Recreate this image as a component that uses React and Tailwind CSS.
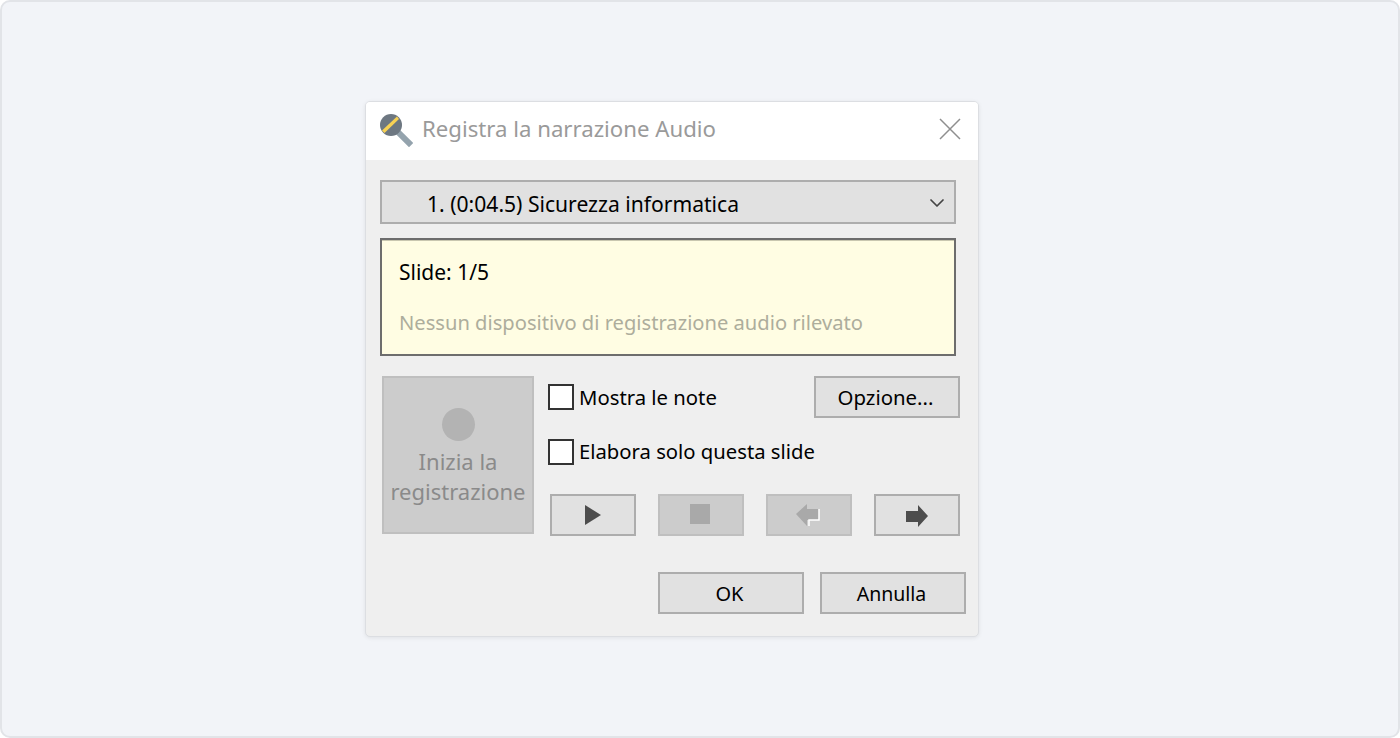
import { ChevronDown } from 'lucide-react'

function Check({ label, size }) {
    return (
        <label className="flex items-center h-[26px]">
            <span className="block w-[26px] h-[26px] bg-white border-2 border-[#333333]" />
            <span className={`ml-[5px] text-black ${size}`}>{label}</span>
        </label>
    )
}

function TransportBtn({ disabled, children }) {
    return (
        <button className={`flex items-center justify-center w-[86px] h-[42px] border-2 ${disabled ? 'bg-[#cccccc] border-[#bfbfbf]' : 'bg-[#e1e1e1] border-[#adadad]'}`}>
            {children}
        </button>
    )
}

function Btn({ label, size }) {
    return (
        <button className={`h-[42px] w-[146px] pt-[1px] pr-[3px] bg-[#e1e1e1] border-2 border-[#adadad] text-black ${size}`}>
            {label}
        </button>
    )
}

export default function App() {
    return (
        <div className="w-[1400px] h-[738px] flex items-center pl-[363px] bg-[#f2f4f8] border-2 border-[#e2e4e8] rounded-[10px] font-['Noto_Sans',sans-serif] overflow-hidden">
            <div className="w-[614px] h-[536px] rounded-[5px] border border-[#dcdee2] bg-[#efefef] shadow-[0_1px_4px_rgba(0,0,0,0.08)] overflow-hidden">
                {/* Title bar */}
                <div className="flex items-center h-[58px] bg-white pl-[13px] pr-[15px]">
                    <svg width="34" height="34" viewBox="0 0 34 34" className="-mt-[2px]">
                        <path d="M19 19 L30 30" stroke="#94a3ad" strokeWidth="6" strokeLinecap="square" />
                        <circle cx="12" cy="12" r="11" fill="#6d7781" />
                        <path d="M3 17.5 L18 3.5 L20 6 L5.5 20 Z" fill="#f7d154" />
                    </svg>
                    <span className="ml-[9px] -mt-[4px] text-[22.2px] text-[#9a9a9a]">Registra la narrazione Audio</span>
                    <svg className="ml-auto -mt-[5px] mr-[1px]" width="24" height="24" viewBox="0 0 24 24">
                        <path d="M2 2 L22 22 M22 2 L2 22" stroke="#8f8f8f" strokeWidth="1.5" fill="none" />
                    </svg>
                </div>

                <div className="px-[14px] pt-[20px]">
                    {/* Slide select */}
                    <div className="flex items-center justify-between w-[576px] h-[44px] bg-[#e1e1e1] border-2 border-[#adadad] pl-[45px] pr-[5px]">
                        <span className="mt-[3px] text-[21.1px] text-black">1. (0:04.5) Sicurezza informatica</span>
                        <ChevronDown size={24} strokeWidth={1.75} className="text-[#444444] mt-[1px]" />
                    </div>

                    {/* Info box */}
                    <div className="mt-[14px] w-[576px] h-[118px] bg-[#fffde3] border-2 border-[#6d6d6d] shadow-[inset_0_1px_0_#c9c7b0] pl-[17px] pt-[17px]">
                        <div className="text-[21px] text-black leading-[30px]">Slide: 1/5</div>
                        <div className="mt-[20px] text-[20.15px] leading-[30px] text-[#adad9c]">Nessun dispositivo di registrazione audio rilevato</div>
                    </div>

                    <div className="flex mt-[20px] ml-[2px] h-[160px]">
                        {/* Record */}
                        <button className="flex flex-col items-center w-[152px] h-[158px] bg-[#cccccc] border-2 border-[#bfbfbf] pt-[30px] text-[22px] leading-[30px] text-[#8a8a8a]">
                            <span className="block w-[33px] h-[33px] rounded-full bg-[#b3b3b3] mb-[5px] shrink-0" />
                            <span>Inizia la</span>
                            <span>registrazione</span>
                        </button>

                        <div className="flex flex-col ml-[14px] w-[412px]">
                            <div className="flex items-center justify-between h-[42px]">
                                <Check label="Mostra le note" size="text-[20.3px]" />
                                <Btn label="Opzione..." size="text-[20.4px]" />
                            </div>
                            <div className="mt-[21px]">
                                <Check label="Elabora solo questa slide" size="text-[20.25px] -mt-[1px]" />
                            </div>
                            <div className="flex justify-between mt-[29px] ml-[2px]">
                                <TransportBtn>
                                    <svg width="18" height="22" viewBox="0 0 18 22"><path d="M1 1 L17 11 L1 21 Z" fill="#4d4d4d" /></svg>
                                </TransportBtn>
                                <TransportBtn disabled>
                                    <svg className="-mt-[2px] -ml-[2px]" width="22" height="22" viewBox="0 0 22 22"><rect x="1" y="1" width="20" height="20" fill="#a9a9a9" /></svg>
                                </TransportBtn>
                                <TransportBtn disabled>
                                    <svg width="26" height="26" viewBox="0 0 26 26" className="-ml-[2px]">
                                        <path d="M12 2 L1 12 L12 24 L12 18 L24 18 L24 7 L12 7 Z" fill="#a9a9a9" />
                                        <path d="M24 7 L24 18 L14 18 L14 24" stroke="#ffffff" strokeWidth="1.5" fill="none" />
                                    </svg>
                                </TransportBtn>
                                <TransportBtn>
                                    <svg width="24" height="26" viewBox="0 0 24 26" className="mt-[1px]">
                                        <path d="M13 2 L23 13 L13 24 L13 19 L1 19 L1 8 L13 8 Z" fill="#4d4d4d" />
                                    </svg>
                                </TransportBtn>
                            </div>
                        </div>
                    </div>

                    {/* Footer */}
                    <div className="flex justify-end gap-[16px] mt-[36px] -mr-[2px]">
                        <Btn label="OK" size="text-[20px]" />
                        <Btn label="Annulla" size="text-[19.5px]" />
                    </div>
                </div>
            </div>
        </div>
    )
}
